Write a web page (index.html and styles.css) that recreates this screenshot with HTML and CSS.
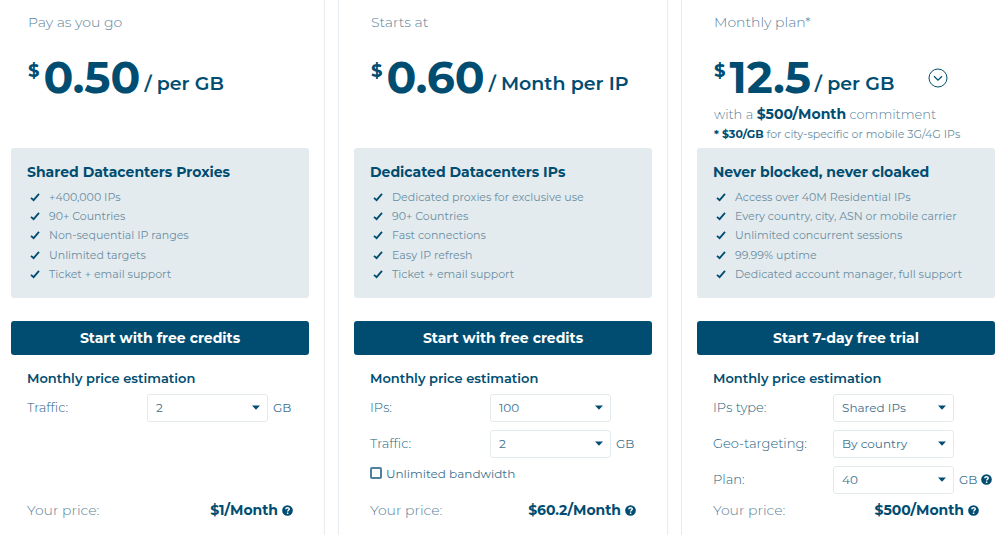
FILE: index.html
```html
<!DOCTYPE html>
<html lang="en">
<head>
<meta charset="utf-8">
<meta name="viewport" content="width=device-width, initial-scale=1">
<title>Proxy pricing</title>
<link rel="stylesheet" href="styles.css">
</head>
<body>
<svg class="sprite" aria-hidden="true">
  <symbol id="check" viewBox="0 0 10 10"><path d="M1 5.8 3.6 8.2 9 1.8" fill="none" stroke="currentColor" stroke-width="1.8"/></symbol>
  <symbol id="caret" viewBox="0 0 8 5"><path d="M0 .5h8L4 4.8z" fill="currentColor"/></symbol>
  <symbol id="help" viewBox="0 0 12 12"><circle cx="6" cy="6" r="5.8" fill="currentColor"/><path d="M4.1 4.6C4.2 2.3 8 2.4 7.9 4.5 7.8 5.8 6.1 5.7 6.1 7.2M6.1 8.1v1.6" fill="none" stroke="#fff" stroke-width="1.6"/></symbol>
</svg>
<main class="plans">
  <section class="card">
    <header class="head">
      <p class="lead">Pay as you go</p>
      <div class="price"><span class="currency">$</span><span class="amount">0.50</span><span class="unit">/ per GB</span></div>
    </header>
    <div class="features">
      <h2 class="features-title">Shared Datacenters Proxies</h2>
      <ul class="list">
        <li class="item"><svg class="check"><use href="#check"/></svg>+400,000 IPs</li>
        <li class="item"><svg class="check"><use href="#check"/></svg>90+ Countries</li>
        <li class="item"><svg class="check"><use href="#check"/></svg>Non-sequential IP ranges</li>
        <li class="item"><svg class="check"><use href="#check"/></svg>Unlimited targets</li>
        <li class="item"><svg class="check"><use href="#check"/></svg>Ticket + email support</li>
      </ul>
    </div>
    <button class="cta" type="button">Start with free credits</button>
    <form class="estimate">
      <h3 class="estimate-title">Monthly price estimation</h3>
      <div class="fields">
        <div class="field">
          <label class="label" for="shared-traffic">Traffic:</label>
          <span class="picker"><select class="select" id="shared-traffic"><option>2</option></select><svg class="caret"><use href="#caret"/></svg></span>
          <span class="suffix">GB</span>
        </div>
      </div>
      <div class="total"><span class="total-label">Your price:</span><strong class="total-value">$1/Month <button class="help" type="button" aria-label="Price help"><svg class="help-icon"><use href="#help"/></svg></button></strong></div>
    </form>
  </section>

  <section class="card">
    <header class="head">
      <p class="lead">Starts at</p>
      <div class="price"><span class="currency">$</span><span class="amount">0.60</span><span class="unit">/ Month per IP</span></div>
    </header>
    <div class="features">
      <h2 class="features-title">Dedicated Datacenters IPs</h2>
      <ul class="list">
        <li class="item"><svg class="check"><use href="#check"/></svg>Dedicated proxies for exclusive use</li>
        <li class="item"><svg class="check"><use href="#check"/></svg>90+ Countries</li>
        <li class="item"><svg class="check"><use href="#check"/></svg>Fast connections</li>
        <li class="item"><svg class="check"><use href="#check"/></svg>Easy IP refresh</li>
        <li class="item"><svg class="check"><use href="#check"/></svg>Ticket + email support</li>
      </ul>
    </div>
    <button class="cta" type="button">Start with free credits</button>
    <form class="estimate">
      <h3 class="estimate-title">Monthly price estimation</h3>
      <div class="fields">
        <div class="field">
          <label class="label" for="ips">IPs:</label>
          <span class="picker"><select class="select" id="ips"><option>100</option></select><svg class="caret"><use href="#caret"/></svg></span>
        </div>
        <div class="field">
          <label class="label" for="dedicated-traffic">Traffic:</label>
          <span class="picker"><select class="select" id="dedicated-traffic"><option>2</option></select><svg class="caret"><use href="#caret"/></svg></span>
          <span class="suffix">GB</span>
        </div>
        <label class="option"><input class="tick" type="checkbox">Unlimited bandwidth</label>
      </div>
      <div class="total"><span class="total-label">Your price:</span><strong class="total-value">$60.2/Month <button class="help" type="button" aria-label="Price help"><svg class="help-icon"><use href="#help"/></svg></button></strong></div>
    </form>
  </section>

  <section class="card">
    <header class="head">
      <p class="lead">Monthly plan*</p>
      <div class="price"><span class="currency">$</span><span class="amount">12.5</span><span class="unit">/ per GB</span>
        <button class="expand" type="button" aria-label="Show plans"><svg class="expand-icon" viewBox="0 0 20 20"><circle cx="10" cy="10" r="9" fill="none" stroke="currentColor"/><path d="m6 8.3 4 3.8 4-3.8" fill="none" stroke="currentColor" stroke-width="1.3"/></svg></button>
      </div>
      <p class="commitment">with a <strong class="strong commitment-price">$500/Month</strong> commitment</p>
      <p class="note"><strong class="strong">* $30/GB</strong> for city-specific or mobile 3G/4G IPs</p>
    </header>
    <div class="features">
      <h2 class="features-title">Never blocked, never cloaked</h2>
      <ul class="list">
        <li class="item"><svg class="check"><use href="#check"/></svg>Access over 40M Residential IPs</li>
        <li class="item"><svg class="check"><use href="#check"/></svg>Every country, city, ASN or mobile carrier</li>
        <li class="item"><svg class="check"><use href="#check"/></svg>Unlimited concurrent sessions</li>
        <li class="item"><svg class="check"><use href="#check"/></svg>99.99% uptime</li>
        <li class="item"><svg class="check"><use href="#check"/></svg>Dedicated account manager, full support</li>
      </ul>
    </div>
    <button class="cta" type="button">Start 7-day free trial</button>
    <form class="estimate">
      <h3 class="estimate-title">Monthly price estimation</h3>
      <div class="fields">
        <div class="field">
          <label class="label" for="ips-type">IPs type:</label>
          <span class="picker"><select class="select" id="ips-type"><option>Shared IPs</option></select><svg class="caret"><use href="#caret"/></svg></span>
        </div>
        <div class="field">
          <label class="label" for="geo">Geo-targeting:</label>
          <span class="picker"><select class="select" id="geo"><option>By country</option></select><svg class="caret"><use href="#caret"/></svg></span>
        </div>
        <div class="field">
          <label class="label" for="plan">Plan:</label>
          <span class="picker"><select class="select" id="plan"><option>40</option></select><svg class="caret"><use href="#caret"/></svg></span>
          <span class="suffix">GB <button class="help" type="button" aria-label="Plan help"><svg class="help-icon"><use href="#help"/></svg></button></span>
        </div>
      </div>
      <div class="total"><span class="total-label">Your price:</span><strong class="total-value">$500/Month <button class="help" type="button" aria-label="Price help"><svg class="help-icon"><use href="#help"/></svg></button></strong></div>
    </form>
  </section>
</main>
</body>
</html>
```
FILE: styles.css
```css
*, *::before, *::after { box-sizing: border-box; }

body {
  margin: 0;
  overflow-x: hidden;
  background: #fff;
  color: #004d71;
  font-family: Montserrat, Inter, "Liberation Sans", sans-serif;
  font-size: 12px;
}

p, h2, h3, ul { margin: 0; padding: 0; }
button, select, input { font: inherit; color: inherit; margin: 0; }
.sprite { display: none; }

.plans {
  display: grid;
  grid-template-columns: repeat(3, 1fr);
  gap: 13px;
  min-height: 100vh;
  margin: 0 -11px 0 -5px;
}

.card {
  min-width: 0;
  padding: 0 15px;
  border: solid #e6ecef;
  border-width: 0 1px;
}

.head {
  min-height: 148px;
  padding: 12px 0 0 17px;
  color: #5b8299;
  font-weight: 300;
}
.lead { font-size: 14px; line-height: 20px; }

.price {
  display: flex;
  align-items: flex-end;
  height: 44px;
  margin: 23px 0 5px;
  color: #004d71;
  font-weight: 700;
  white-space: nowrap;
}
.currency { align-self: flex-start; padding-top: 6px; font-size: 18px; line-height: 20px; margin-right: 4px; }
.amount { font-size: 44px; line-height: 44px; }
.unit { margin: 0 0 3px 4px; font-size: 19px; line-height: 24px; font-weight: 600; }

.expand { align-self: center; padding: 1px 0 0; margin-left: 34px; border: 0; background: none; }
.expand-icon { display: block; width: 20px; height: 20px; }

.commitment { font-size: 13px; line-height: 20px; }
.commitment-price { font-size: 14px; }
.note { font-size: 11px; line-height: 20px; font-weight: 400; color: #6a8ea2; white-space: nowrap; }
.strong { color: #004d71; font-weight: 700; }

.features {
  display: flex;
  flex-direction: column;
  min-height: 150px;
  padding: 14px 16px;
  border-radius: 3px;
  background: #e4ebef;
}
.features-title { margin-bottom: 5px; font-size: 14px; line-height: 20px; font-weight: 700; }
.list { display: grid; flex: 1; list-style: none; }
.item { display: flex; align-items: center; font-size: 11px; color: #6a8ea2; font-weight: 400; white-space: nowrap; }
.check { width: 10px; height: 10px; margin: 0 9px 0 3px; color: #004d71; }

.cta {
  display: block;
  width: 100%;
  height: 34px;
  margin-top: 23px;
  padding: 0 0 1px;
  border: 0;
  border-radius: 3px;
  background: #004d71;
  color: #fff;
  font-size: 14px;
  font-weight: 700;
}

.estimate { padding: 13px 0 12px 16px; }
.estimate-title { margin-bottom: 6px; font-size: 13px; line-height: 20px; font-weight: 600; }
.fields { display: flex; flex-direction: column; gap: 8px; min-height: 106px; }
.field { display: flex; align-items: center; height: 28px; color: #40718d; white-space: nowrap; }
.label { flex: 0 0 120px; padding-bottom: 2px; font-size: 13px; font-weight: 300; color: #255f80; }

.picker { position: relative; flex: 0 0 121px; }
.select {
  display: block;
  width: 100%;
  height: 28px;
  padding: 0 24px 1px 8px;
  border: 1px solid #e3eaee;
  border-radius: 3px;
  background: #fff;
  color: #40718d;
  appearance: none;
  font-size: 12px;
}
.caret { position: absolute; top: 11px; right: 8px; width: 8px; height: 5px; color: #004d71; pointer-events: none; }
.suffix { display: flex; align-items: center; gap: 4px; margin-left: 5px; padding-bottom: 2px; font-size: 12px; }

.option { display: flex; align-items: center; gap: 4px; height: 14px; color: #40718d; font-size: 12px; }
.tick { width: 12px; height: 12px; border: 2px solid #4f819c; border-radius: 2px; background: #fff; appearance: none; }
.tick:checked { background: #004d71; }

.total { display: flex; align-items: center; justify-content: space-between; padding-right: 16px; line-height: 20px; }
.total-label { color: #5b8299; font-size: 14px; font-weight: 300; }
.total-value { display: flex; align-items: center; gap: 4px; font-size: 14px; font-weight: 700; }
.help { padding: 0; border: 0; background: none; color: #004d71; }
.help-icon { display: block; width: 11px; height: 11px; }
```
